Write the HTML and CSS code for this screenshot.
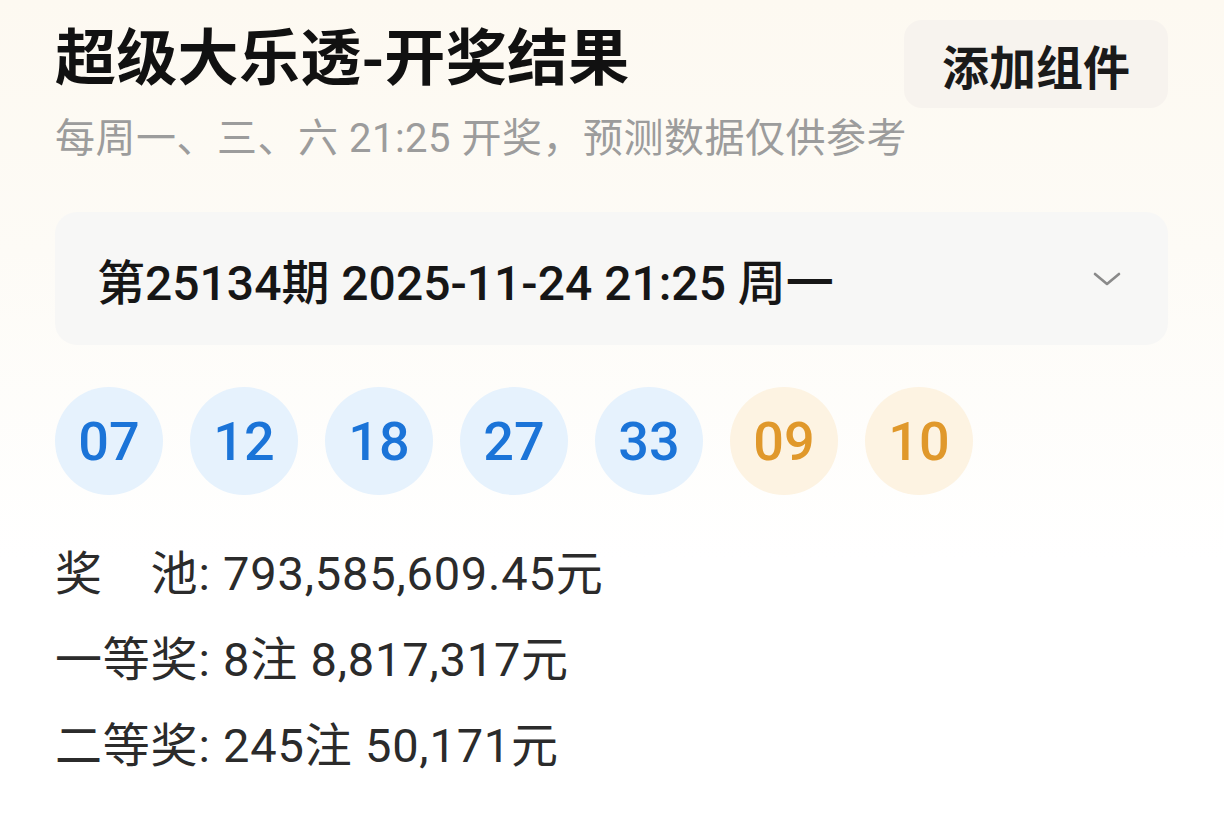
FILE: index.html
```html
<!DOCTYPE html>
<html lang="zh-CN">
<head>
<meta charset="utf-8">
<title>超级大乐透-开奖结果</title>
<link rel="stylesheet" href="styles.css">
</head>
<body>
<div class="page">
  <header class="header">
    <h1 class="title">超级大乐透-开奖结果</h1>
    <button class="add-btn">添加组件</button>
  </header>
  <p class="subtitle">每周一、三、六 21:25 开奖，预测数据仅供参考</p>

  <div class="selector">
    <span class="issue">第25134期 2025-11-24 21:25 周一</span>
    <svg class="chevron" width="30" height="18" viewBox="0 0 30 18"><path d="M3 4 L15 14 L27 4" fill="none" stroke="#8a8a8a" stroke-width="2.6" stroke-linecap="round" stroke-linejoin="round"/></svg>
  </div>

  <div class="balls">
    <span class="ball front">07</span>
    <span class="ball front">12</span>
    <span class="ball front">18</span>
    <span class="ball front">27</span>
    <span class="ball front">33</span>
    <span class="ball back">09</span>
    <span class="ball back">10</span>
  </div>

  <ul class="prizes">
    <li>奖　池: 793,585,609.45元</li>
    <li>一等奖: 8注 8,817,317元</li>
    <li>二等奖: 245注 50,171元</li>
  </ul>
</div>
</body>
</html>
```

FILE: styles.css
```css
* { box-sizing: border-box; }
html, body {
  margin: 0;
  padding: 0;
  min-height: 100%;
  font-family: Roboto, "Noto Sans CJK SC", sans-serif;
  color: #222;
}
body {
  background: linear-gradient(180deg, #fdf9f1 0px, #fdfbf6 250px, #ffffff 560px, #ffffff 100%);
  min-height: 815px;
}
.page {
  padding: 20px 56px 0 55px;
}
.header {
  display: flex;
  justify-content: space-between;
  align-items: flex-start;
}
.title {
  margin: 0;
  font-family: "Noto Sans CJK SC", sans-serif;
  font-size: 61px;
  font-weight: 700;
  line-height: 68px;
  color: #111;
  letter-spacing: 0.3px;
}
.add-btn {
  height: 88px;
  padding: 0 38px;
  border: none;
  border-radius: 18px;
  background: #f7f3ee;
  font-family: "Noto Sans CJK SC", sans-serif;
  font-size: 47px;
  font-weight: 700;
  color: #1a1a1a;
}
.subtitle {
  margin: 0;
  margin-top: 4px;
  font-size: 40px;
  line-height: 54px;
  color: #9c9c9c;
  letter-spacing: 0.5px;
}
.selector {
  margin-top: 46px;
  height: 133px;
  border-radius: 22px;
  background: #f7f7f6;
  display: flex;
  align-items: center;
  justify-content: space-between;
  padding: 0 46px 0 42px;
}
.issue {
  font-size: 48px;
  font-weight: 500;
  color: #161616;
}
.balls {
  margin-top: 42px;
  display: flex;
  gap: 27px;
}
.ball {
  width: 108px;
  height: 108px;
  border-radius: 50%;
  display: flex;
  align-items: center;
  justify-content: center;
  font-size: 54px;
  font-weight: 500;
}
.front { background: #e6f2fd; color: #1b74d8; }
.back { background: #fdf3e2; color: #e0982b; }
.prizes {
  list-style: none;
  margin: 36px 0 0;
  padding: 0;
}
.prizes li {
  font-size: 47px;
  line-height: 86px;
  color: #2b2b2b;
  letter-spacing: 0.8px;
}
```
